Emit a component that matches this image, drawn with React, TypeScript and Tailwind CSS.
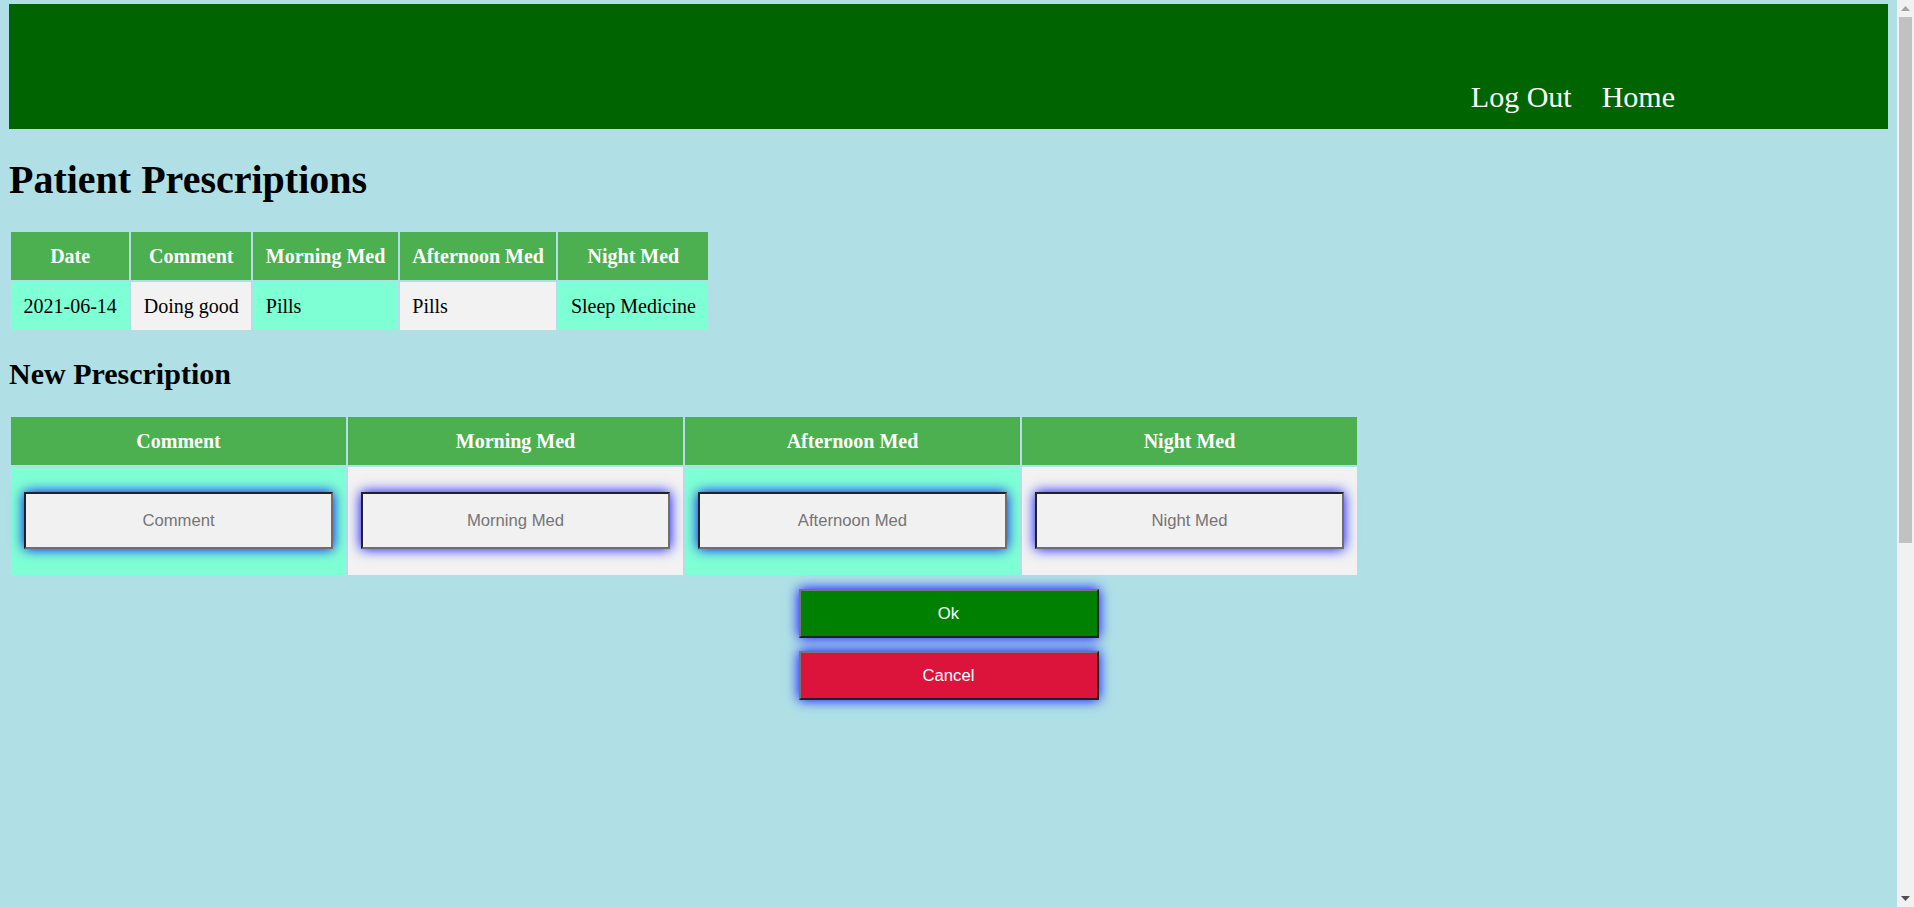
import React from "react";

const history = [
  {
    date: "2021-06-14",
    comment: "Doing good",
    morning: "Pills",
    afternoon: "Pills",
    night: "Sleep Medicine",
  },
];

const fields = ["Comment", "Morning Med", "Afternoon Med", "Night Med"];

const App: React.FC = () => {
  return (
    <div className="flex h-[907px] overflow-hidden bg-[#b0e0e6]">
      <div className="min-w-0 flex-1 px-[9px] pt-[4px] font-['Liberation_Serif',serif] text-black">
        {/* Top bar */}
        <header className="flex h-[125px] items-end justify-end gap-[30px] bg-[#006400] pb-[15px] pr-[213px] text-[30px] leading-[34px] text-white">
          <a href="#">Log Out</a>
          <a href="#">Home</a>
        </header>

        <h1 className="mt-[28px] mb-[27px] text-[40px] font-bold leading-[46px]">
          Patient Prescriptions
        </h1>

        {/* Existing prescriptions */}
        <table className="border-separate border-spacing-[2px] text-[20px] leading-[24px]">
          <thead>
            <tr>
              {["Date", "Comment", "Morning Med", "Afternoon Med", "Night Med"].map((h) => (
                <th key={h} className="bg-[#4caf50] px-[12.5px] py-[12px] text-center font-bold text-white">
                  {h}
                </th>
              ))}
            </tr>
          </thead>
          <tbody>
            {history.map((r) => (
              <tr key={r.date}>
                {[r.date, r.comment, r.morning, r.afternoon, r.night].map((v, i) => (
                  <td key={i} className="px-[12.5px] py-[12px] text-left odd:bg-[#7fffd4] even:bg-[#f2f2f2]">
                    {v}
                  </td>
                ))}
              </tr>
            ))}
          </tbody>
        </table>

        <h2 className="mt-[24px] mb-[24px] text-[30px] font-bold leading-[35px]">New Prescription</h2>

        {/* New prescription form */}
        <table className="border-separate border-spacing-[2px] text-[20px] leading-[24px]">
          <thead>
            <tr>
              {fields.map((f) => (
                <th key={f} className="bg-[#4caf50] p-[12px] text-center font-bold text-white">
                  {f}
                </th>
              ))}
            </tr>
          </thead>
          <tbody>
            <tr>
              {fields.map((f) => (
                <td key={f} className="px-[13px] pt-[12px] pb-[13px] odd:bg-[#7fffd4] even:bg-[#f2f2f2]">
                  <input
                    type="text"
                    placeholder={f}
                    className="my-[13px] block h-[57px] w-[309px] border-2 border-t-[#222222] border-l-[#222222] border-b-[#6e6e6e] border-r-[#6e6e6e] bg-[#f1f1f1] text-center font-['Liberation_Sans',Arial,sans-serif] text-[16.67px] shadow-[0_0_12px_#0000ff] placeholder:text-[#757575]"
                  />
                </td>
              ))}
            </tr>
          </tbody>
        </table>

        <div className="mt-[12px] flex flex-col items-center gap-[13px] font-['Liberation_Sans',Arial,sans-serif] text-[16.67px] text-white">
          <button className="h-[49px] w-[300px] border-2 border-t-[#767676] border-l-[#767676] border-b-[#222222] border-r-[#222222] bg-[#008000] shadow-[0_0_12px_#0000ff]">
            Ok
          </button>
          <button className="h-[49px] w-[300px] border-2 border-t-[#767676] border-l-[#767676] border-b-[#222222] border-r-[#222222] bg-[#dc143c] shadow-[0_0_12px_#0000ff]">
            Cancel
          </button>
        </div>
      </div>

      {/* Window scrollbar */}
      <div className="flex w-[17px] shrink-0 flex-col bg-[#f1f1f1]">
        <div className="flex h-[17px] items-center justify-center">
          <svg width="9" height="5" viewBox="0 0 9 5">
            <polygon points="0,5 4.5,0 9,5" fill="#a3a3a3" />
          </svg>
        </div>
        <div className="mx-[2px] h-[526px] bg-[#c1c1c1]" />
        <div className="flex-1" />
        <div className="flex h-[17px] items-center justify-center">
          <svg width="9" height="5" viewBox="0 0 9 5">
            <polygon points="0,0 9,0 4.5,5" fill="#505050" />
          </svg>
        </div>
      </div>
    </div>
  );
};

export default App;
